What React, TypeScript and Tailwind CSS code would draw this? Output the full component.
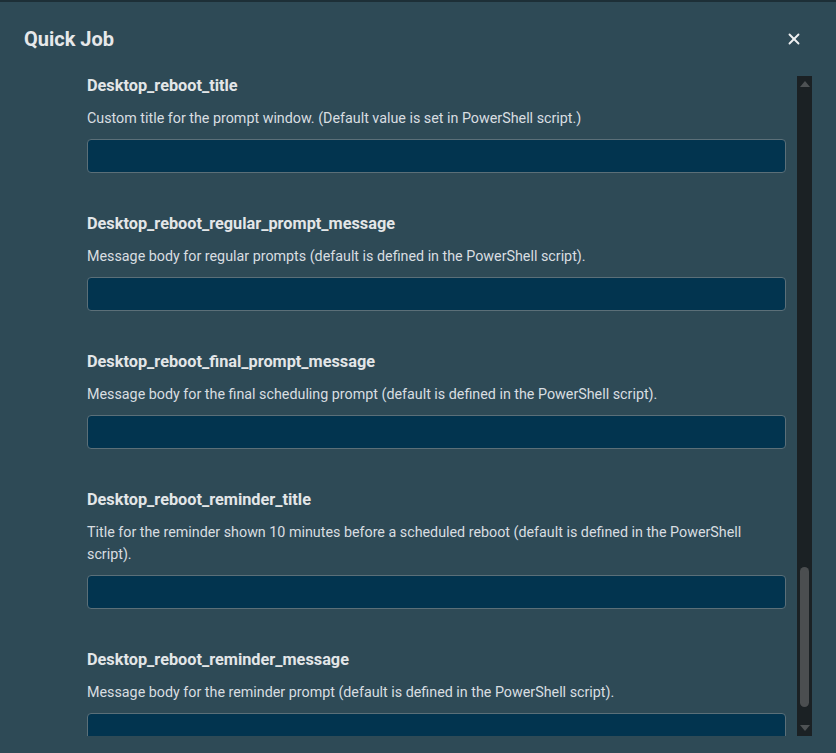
import { X } from 'lucide-react';

type Param = {
  name: string;
  help: string;
};

const params: Param[] = [
  {
    name: 'Desktop_reboot_title',
    help: 'Custom title for the prompt window. (Default value is set in PowerShell script.)',
  },
  {
    name: 'Desktop_reboot_regular_prompt_message',
    help: 'Message body for regular prompts (default is defined in the PowerShell script).',
  },
  {
    name: 'Desktop_reboot_final_prompt_message',
    help: 'Message body for the final scheduling prompt (default is defined in the PowerShell script).',
  },
  {
    name: 'Desktop_reboot_reminder_title',
    help: 'Title for the reminder shown 10 minutes before a scheduled reboot (default is defined in the PowerShell script).',
  },
  {
    name: 'Desktop_reboot_reminder_message',
    help: 'Message body for the reminder prompt (default is defined in the PowerShell script).',
  },
];

const ParamField = ({ name, help }: Param) => {
  return (
    <div className="mb-[41px]">
      <label className="block h-5 text-[16.3px] leading-5 font-bold text-[#e3e6e8] mb-[11px]">
        {name}
      </label>
      <p className="text-[14.3px] leading-[22px] text-[#d9dee1] mb-[10px]">{help}</p>
      <input
        type="text"
        className="block w-full h-[34px] rounded bg-[#02344f] border border-[#5b6f78] outline-none"
      />
    </div>
  );
};

const Scrollbar = () => {
  return (
    <div className="w-[15px] bg-[#1b2124] flex flex-col items-center">
      <div className="h-[16px] flex items-center justify-center">
        <div className="w-0 h-0 border-l-[5px] border-r-[5px] border-b-[6px] border-l-transparent border-r-transparent border-b-[#4e5254]" />
      </div>
      <div className="flex-1 w-full flex flex-col justify-end pb-[13px]">
        <div className="mx-auto w-[9px] h-[140px] rounded-full bg-[#4b4e50]" />
      </div>
      <div className="h-[16px] flex items-center justify-center">
        <div className="w-0 h-0 border-l-[5px] border-r-[5px] border-t-[6px] border-l-transparent border-r-transparent border-t-[#4e5254]" />
      </div>
    </div>
  );
};

export default function App() {
  return (
    <div
      className="w-[836px] h-[753px] bg-[#2e4a56] border-t-2 border-[#1d2f37] flex flex-col overflow-hidden"
      style={{ fontFamily: 'Roboto, "Noto Sans", sans-serif' }}
    >
      <header className="h-[74px] flex items-center justify-between pl-6 pr-[34px] pb-[1px]">
        <h1 className="text-[20px] font-bold text-[#e6e8ea]">Quick Job</h1>
        <button className="text-[#eef0f1] translate-x-px">
          <X size={18} strokeWidth={2.5} />
        </button>
      </header>

      <div className="h-[660px] flex pr-6">
        <div className="flex-1 overflow-hidden pl-[87px] pr-[11px]">
          {params.map((p) => (
            <ParamField key={p.name} {...p} />
          ))}
        </div>
        <Scrollbar />
      </div>
    </div>
  );
}
